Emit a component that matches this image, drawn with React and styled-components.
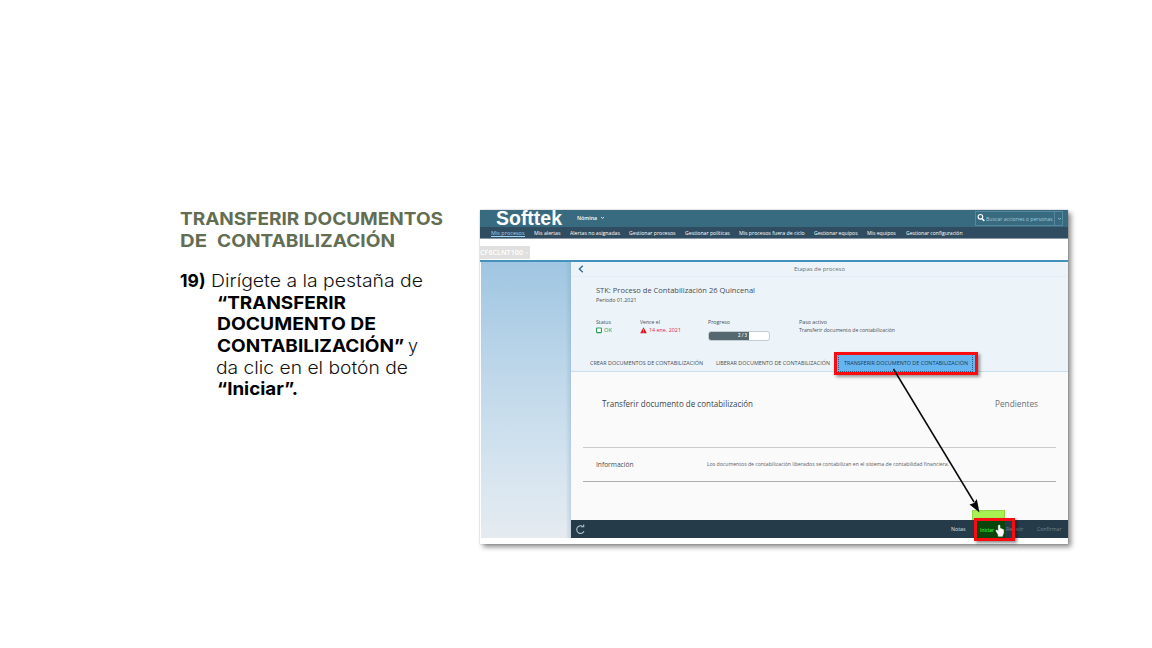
import React, { useLayoutEffect, useRef, useState } from 'react';
import styled, { createGlobalStyle, css } from 'styled-components';

const Global = createGlobalStyle`
  html, body { margin: 0; background: #fff; }
  * { box-sizing: border-box; }
`;

const Page = styled.main`
  width: 1152px;
  height: 648px;
  overflow: hidden;
  display: flex;
  align-items: flex-start;
  padding: 208px 0 0 180px;
  background: #fff;
  font-family: Inter, 'Liberation Sans', sans-serif;
`;

const FitBox = styled.span`
  display: inline-block;
  flex: none;
  width: ${p => p.$w}px;
  white-space: pre;
  vertical-align: baseline;
`;
const FitInner = styled.span`
  display: inline-block;
  transform-origin: left center;
`;

/* Stretches one line of text so that it takes exactly w pixels. */
function Fit({ w, children, className }) {
  const ref = useRef(null);
  const [scale, setScale] = useState(1);
  useLayoutEffect(() => {
    const fit = () => { if (ref.current && ref.current.offsetWidth) {
      const s = getComputedStyle(ref.current).transform;
      const k = s && s !== 'none' ? parseFloat(s.slice(7)) : 1;
      setScale(w / (ref.current.getBoundingClientRect().width / k));
    } };
    fit();
    document.fonts.ready.then(fit);
  }, [w, children]);
  return (
    <FitBox $w={w} className={className}>
      <FitInner ref={ref} style={{ transform: `scaleX(${scale})` }}>{children}</FitInner>
    </FitBox>
  );
}

const Instructions = styled.section`
  width: 300px;
  flex: none;
`;
const Title = styled.h1`
  margin: 0 0 18.4px;
  font-size: 17.8px;
  font-weight: 700;
  line-height: 21.8px;
  color: #626d52;
`;
const Line = styled.div`
  display: flex;
  height: ${p => p.$h || 21.65}px;
  gap: ${p => p.$gap || 5}px;
  padding-left: ${p => p.$indent || 0}px;
`;
const Step = styled.div`
  font-size: 17.8px;
  line-height: 21.65px;
  font-weight: 300;
  color: #111;
  b { font-weight: 700; color: #000; }
`;

const Shot = styled.section`
  position: relative;
  flex: none;
  width: 588px;
  height: 334px;
  margin-top: 2px;
  background: #fff;
  box-shadow: 3px 3px 5px rgba(0,0,0,.45), 0 0 1px rgba(0,0,0,.35);
  font-family: 'Open Sans', 'Noto Sans', sans-serif;
`;
const TopBar = styled.header`
  height: 17px;
  display: flex;
  align-items: center;
  background: #386b80;
  color: #fff;
  padding: 0 5px 0 16px;
`;
const Logo = styled.div`
  font: 700 20px/17px 'Liberation Sans', sans-serif;
  width: 81px;
`;
const Module = styled.div`
  display: flex;
  align-items: center;
  gap: 3px;
  flex: 1;
  font-size: 5.8px;
  font-weight: 600;
  line-height: 8px;
  position: relative;
  top: -1px;
`;
const Search = styled.div`
  display: flex;
  align-items: center;
  gap: 1px;
  width: 88px;
  height: 15px;
  padding-left: 1px;
  border: 1px solid #5588a0;
  color: #a5c8da;
  font-size: 5.8px;
  line-height: 8px;
`;
const SearchMenu = styled.span`
  display: flex;
  align-items: center;
  height: 13px;
  padding-left: 2px;
  border-left: 1px solid #5588a0;
`;
const Nav = styled.nav`
  height: 12px;
  display: flex;
  gap: 9.4px;
  padding: 2px 0 0 11px;
  background: #304c60;
  border-bottom: 1px solid #8b9aa6;
  color: #fff;
  font-size: 5.7px;
  font-weight: 500;
  line-height: 8px;
`;
const NavItem = styled.span`
  height: 8px;
  ${p => p.$active && css`color: #9ed4f4; border-bottom: 1px solid #9ed4f4;`}
`;
const Strip = styled.div`
  height: 20.5px;
  padding-top: 7px;
`;
const Client = styled.div`
  width: 50px;
  height: 13px;
  display: flex;
  align-items: center;
  gap: 2px;
  border-radius: 0 1px 1px 0;
  background: #e0e0e0;
  color: #fff;
  font-size: 7px;
  font-weight: 600;
  line-height: 12px;
`;
const Body = styled.div`
  display: flex;
  height: 278.5px;
  border-top: 2.5px solid #4291bf;
`;
const Side = styled.aside`
  width: 90.3px;
  flex: none;
  margin-left: 1px;
  background: linear-gradient(90deg, transparent 94%, rgba(95,140,175,.25)), linear-gradient(#a0c6e2, #c1d9ea 45%, #d9e6f0 80%, #e5ebf0);
`;
const Main = styled.div`
  flex: 1;
  display: flex;
  flex-direction: column;
  background: #fafafa;
  color: #454c52;
`;
const Summary = styled.div`
  height: 110px;
  background: #edf4f9;
  border-bottom: 1px solid #c9dfec;
`;
const StageBar = styled.div`
  height: 15px;
  display: flex;
  align-items: center;
  padding-left: 7px;
  gap: 210px;
  font-size: 5.8px;
  line-height: 10px;
  color: #667077;
  border-bottom: 1px solid #e5eef4;
`;
const Process = styled.div`
  padding: 7px 0 0 24.7px;
  font-size: 8px;
  line-height: 11px;
`;
const Period = styled.div`
  font-size: 5.8px;
  line-height: 11px;
`;
const Facts = styled.div`
  display: grid;
  grid-template-columns: 44px 68.5px 90.5px auto;
  margin-top: 12px;
  padding-left: 24.7px;
  height: 33px;
  font-size: 5.7px;
  line-height: 8.5px;
`;
const Fact = styled.div`
  display: flex;
  flex-direction: column;
`;
const Value = styled.div`
  display: flex;
  align-items: center;
  gap: 2.5px;
  height: 9px;
  color: ${p => p.$color || '#454c52'};
`;
const Progress = styled.div`
  width: 62px;
  height: 10px;
  margin-top: 5px;
  overflow: hidden;
  border-radius: 3px;
  border: 1px solid #c2cdd2;
  background: linear-gradient(90deg, #56686f 41px, #fff 41px) border-box;
  color: #fff;
  font-size: 5px;
  font-weight: 600;
  line-height: 7px;
  padding-left: 29px;
`;
const Tabs = styled.div`
  display: flex;
  align-items: center;
  height: 17px;
  margin-top: 4px;
  padding-left: 18.5px;
  font-size: 5.7px;
  line-height: 10px;
  gap: 13.5px;
`;
const ActiveTab = styled.div`
  display: flex;
  align-items: center;
  flex: none;
  width: 144.5px;
  height: 23px;
  margin-left: -10px;
  padding-left: 7px;
  border: 3px solid #f90c10;
  background: #66b5f1;
  box-shadow: 2px 2px 3px rgba(0,0,0,.4);
  color: #163858;
`;
const Focus = styled.div`
  display: flex;
  align-items: center;
  flex: none;
  width: 135px;
  height: 17px;
  margin-left: -6px;
  padding-left: 5px;
  border: 1px dotted #28587e;
  border-top-color: transparent;
`;
const Heading = styled.div`
  display: flex;
  justify-content: space-between;
  padding: 26px 30.5px 0 31px;
  height: 75px;
  font-size: 8.2px;
  line-height: 12px;
  color: #40464a;
`;
const Pending = styled.span` color: #6b7073; `;
const Info = styled.div`
  display: flex;
  align-items: center;
  gap: 74px;
  height: 35px;
  margin: 0 12px;
  padding-left: 12.3px;
  border-top: 1px solid #c9cbcc;
  border-bottom: 1.5px solid #aaacae;
  font-size: 7px;
`;
const Small = styled.span` font-size: 5.5px; color: #596066; `;
const Footer = styled.footer`
  display: flex;
  align-items: center;
  height: 18px;
  margin-top: auto;
  padding-left: 5px;
  background: #263b49;
  color: #dce6ee;
  font-size: 5.7px;
  line-height: 8px;
`;
const Actions = styled.div`
  display: flex;
  gap: 13px;
  margin-left: 366px;
`;
const Dim = styled.span`
  color: #74858f;
  margin-left: ${p => p.$ml || 0}px;
`;
const Start = styled.span` color: #35ee2f; `;
const GreenNote = styled.div`
  position: absolute;
  left: 492px;
  top: 300px;
  width: 33px;
  height: 10px;
  background: #a8f151;
  border: 1px solid #91d745;
`;
const StartMark = styled.div`
  position: absolute;
  left: 493.5px;
  top: 307.5px;
  width: 41.5px;
  height: 23.5px;
  border: 3px solid #f90c10;
  background: linear-gradient(90deg, #0c450b 28px, transparent 28px);
  box-shadow: 2px 2px 3px rgba(0,0,0,.45);
  padding: 5px 0 0 3px;
  font-size: 5.6px;
  font-weight: 600;
  line-height: 8px;
`;
const Overlay = styled.svg`
  position: absolute;
  left: 0;
  top: 0;
  pointer-events: none;
`;

const nav = [['Mis procesos', 33.5], ['Mis alertas', 26.5], ['Alertas no asignadas', 50], ['Gestionar procesos', 46.5], ['Gestionar políticas', 44.8], ['Mis procesos fuera de ciclo', 65.7], ['Gestionar equipos', 43.6], ['Mis equipos', 28.8], ['Gestionar configuración', 56.5]];

const Chevron = ({ w = 5, c = 'currentColor' }) => (
  <svg width={w} height="4" viewBox="0 0 5 4" fill="none" stroke={c} strokeWidth=".8"><path d="M1 1l1.5 1.5L4 1" /></svg>
);

export default function App() {
  return (
    <Page>
      <Global />
      <Instructions>
        <Title>
          <Line $h={21.8}><Fit w={263}>TRANSFERIR DOCUMENTOS</Fit></Line>
          <Line $h={21.8} $gap={10}><Fit w={27}>DE</Fit><Fit w={178}>CONTABILIZACIÓN</Fit></Line>
        </Title>
        <Step>
          <Line><b><Fit w={25.5}>19)</Fit></b><Fit w={212}>Dirígete a la pestaña de</Fit></Line>
          <Line $indent={36.5}><b><Fit w={129}>“TRANSFERIR</Fit></b></Line>
          <Line $indent={36.5}><b><Fit w={159}>DOCUMENTO DE</Fit></b></Line>
          <Line $indent={36.5} $gap={4}><b><Fit w={187}>CONTABILIZACIÓN”</Fit></b><Fit w={10}>y</Fit></Line>
          <Line $indent={36}><Fit w={192}>da clic en el botón de</Fit></Line>
          <Line $indent={36.5}><b><Fit w={81}>“Iniciar”.</Fit></b></Line>
        </Step>
      </Instructions>

      <Shot>
        <TopBar>
          <Logo><Fit w={66}>Softtek</Fit></Logo>
          <Module><Fit w={20}>Nómina</Fit><Chevron /></Module>
          <Search>
            <svg width="8" height="11" viewBox="0 0 8 11" fill="none" stroke="#fff"><circle cx="3.4" cy="3.8" r="2.3" strokeWidth="1.1" /><path d="M5.2 5.7L7.3 8" strokeWidth="1.5" /></svg>
            <Fit w={66.5}>Buscar acciones o personas</Fit>
            <SearchMenu><Chevron /></SearchMenu>
          </Search>
        </TopBar>
        <Nav>
          {nav.map(([t, w], i) => <NavItem key={t} $active={i === 0}><Fit w={w}>{t}</Fit></NavItem>)}
        </Nav>
        <Strip><Client><Fit w={43}>CF6CLNT100</Fit><Chevron w={4} /></Client></Strip>
        <Body>
          <Side />
          <Main>
            <Summary>
              <StageBar>
                <svg width="6" height="8" viewBox="0 0 6 8" fill="none" stroke="#376b8d" strokeWidth="1.4"><path d="M4.8 .8L1.4 4l3.4 3.2" /></svg>
                <Fit w={51}>Etapas de proceso</Fit>
              </StageBar>
              <Process>
                <Fit w={159}>STK: Proceso de Contabilización 26 Quincenal</Fit>
                <Period><Fit w={40.5}>Período 01.2021</Fit></Period>
              </Process>
              <Facts>
                <Fact><Fit w={15}>Status</Fit>
                  <Value $color="#2b9957">
                    <svg width="6" height="7" viewBox="0 0 6 7"><rect x=".6" y="1" width="4.8" height="4.6" rx=".5" fill="#fff" stroke="#2b9957" strokeWidth="1.1" /></svg>
                    <Fit w={8}>OK</Fit>
                  </Value>
                </Fact>
                <Fact><Fit w={20}>Vence el</Fit>
                  <Value $color="#e32b36">
                    <svg width="7" height="7" viewBox="0 0 7 7"><path d="M3.5 .3L6.8 6.3H.2z" fill="#e01520" /><path d="M3.5 2.2v2M3.5 4.8v.8" stroke="#fff" strokeWidth=".5" /></svg>
                    <Fit w={32}>14 ene. 2021</Fit>
                  </Value>
                </Fact>
                <Fact><Fit w={22}>Progreso</Fit><Progress><Fit w={9}>2 / 3</Fit></Progress></Fact>
                <Fact><Fit w={28}>Paso activo</Fit><Value><Fit w={96}>Transferir documento de contabilización</Fit></Value></Fact>
              </Facts>
              <Tabs>
                <Fit w={113}>CREAR DOCUMENTOS DE CONTABILIZACIÓN</Fit>
                <Fit w={114}>LIBERAR DOCUMENTO DE CONTABILIZACIÓN</Fit>
                <ActiveTab><Focus><Fit w={124}>TRANSFERIR DOCUMENTO DE CONTABILIZACIÓN</Fit></Focus></ActiveTab>
              </Tabs>
            </Summary>
            <Heading>
              <Fit w={151}>Transferir documento de contabilización</Fit>
              <Pending><Fit w={43}>Pendientes</Fit></Pending>
            </Heading>
            <Info>
              <Fit w={37.5}>Información</Fit>
              <Small><Fit w={242}>Los documentos de contabilización liberados se contabilizan en el sistema de contabilidad financiera.</Fit></Small>
            </Info>
            <Footer>
              <svg width="9" height="11" viewBox="0 0 9 11" fill="none" stroke="#a5bfce" strokeWidth="1.1"><path d="M8 7.2A3.8 3.8 0 1 1 6.8 2.5" /><path d="M5 2.7h2.7V.4" /></svg>
              <Actions>
                <Fit w={14.5}>Notas</Fit>
                <Dim $ml={27.5}><Fit w={17.5}>Repetir</Fit></Dim>
                <Dim><Fit w={24.5}>Confirmar</Fit></Dim>
              </Actions>
            </Footer>
          </Main>
        </Body>

        <GreenNote />
        <StartMark>
          <Start><Fit w={14}>Iniciar</Fit></Start>
        </StartMark>
        <Overlay width="588" height="334" viewBox="0 0 588 334">
          <path d="M413.5 159L494 292" stroke="#080808" strokeWidth="1.5" />
          <path d="M499.5 302.5L489.5 294.4L494 293L496.8 289z" fill="#080808" />
          <path d="M518.2 324.6l-2-3.4c-.5-1 .5-1.6 1.2-.8l1 1v-5.6c0-1 1.5-1 1.5 0v3.1c.4-.5 1.1-.4 1.3.1.5-.4 1.1-.1 1.2.4.6-.2 1.2.1 1.2.9v2.2c0 1.2-.7 2-1 3v.7h-4.4z" fill="#fff" stroke="#fff" strokeWidth=".6" />
        </Overlay>
      </Shot>
    </Page>
  );
}
